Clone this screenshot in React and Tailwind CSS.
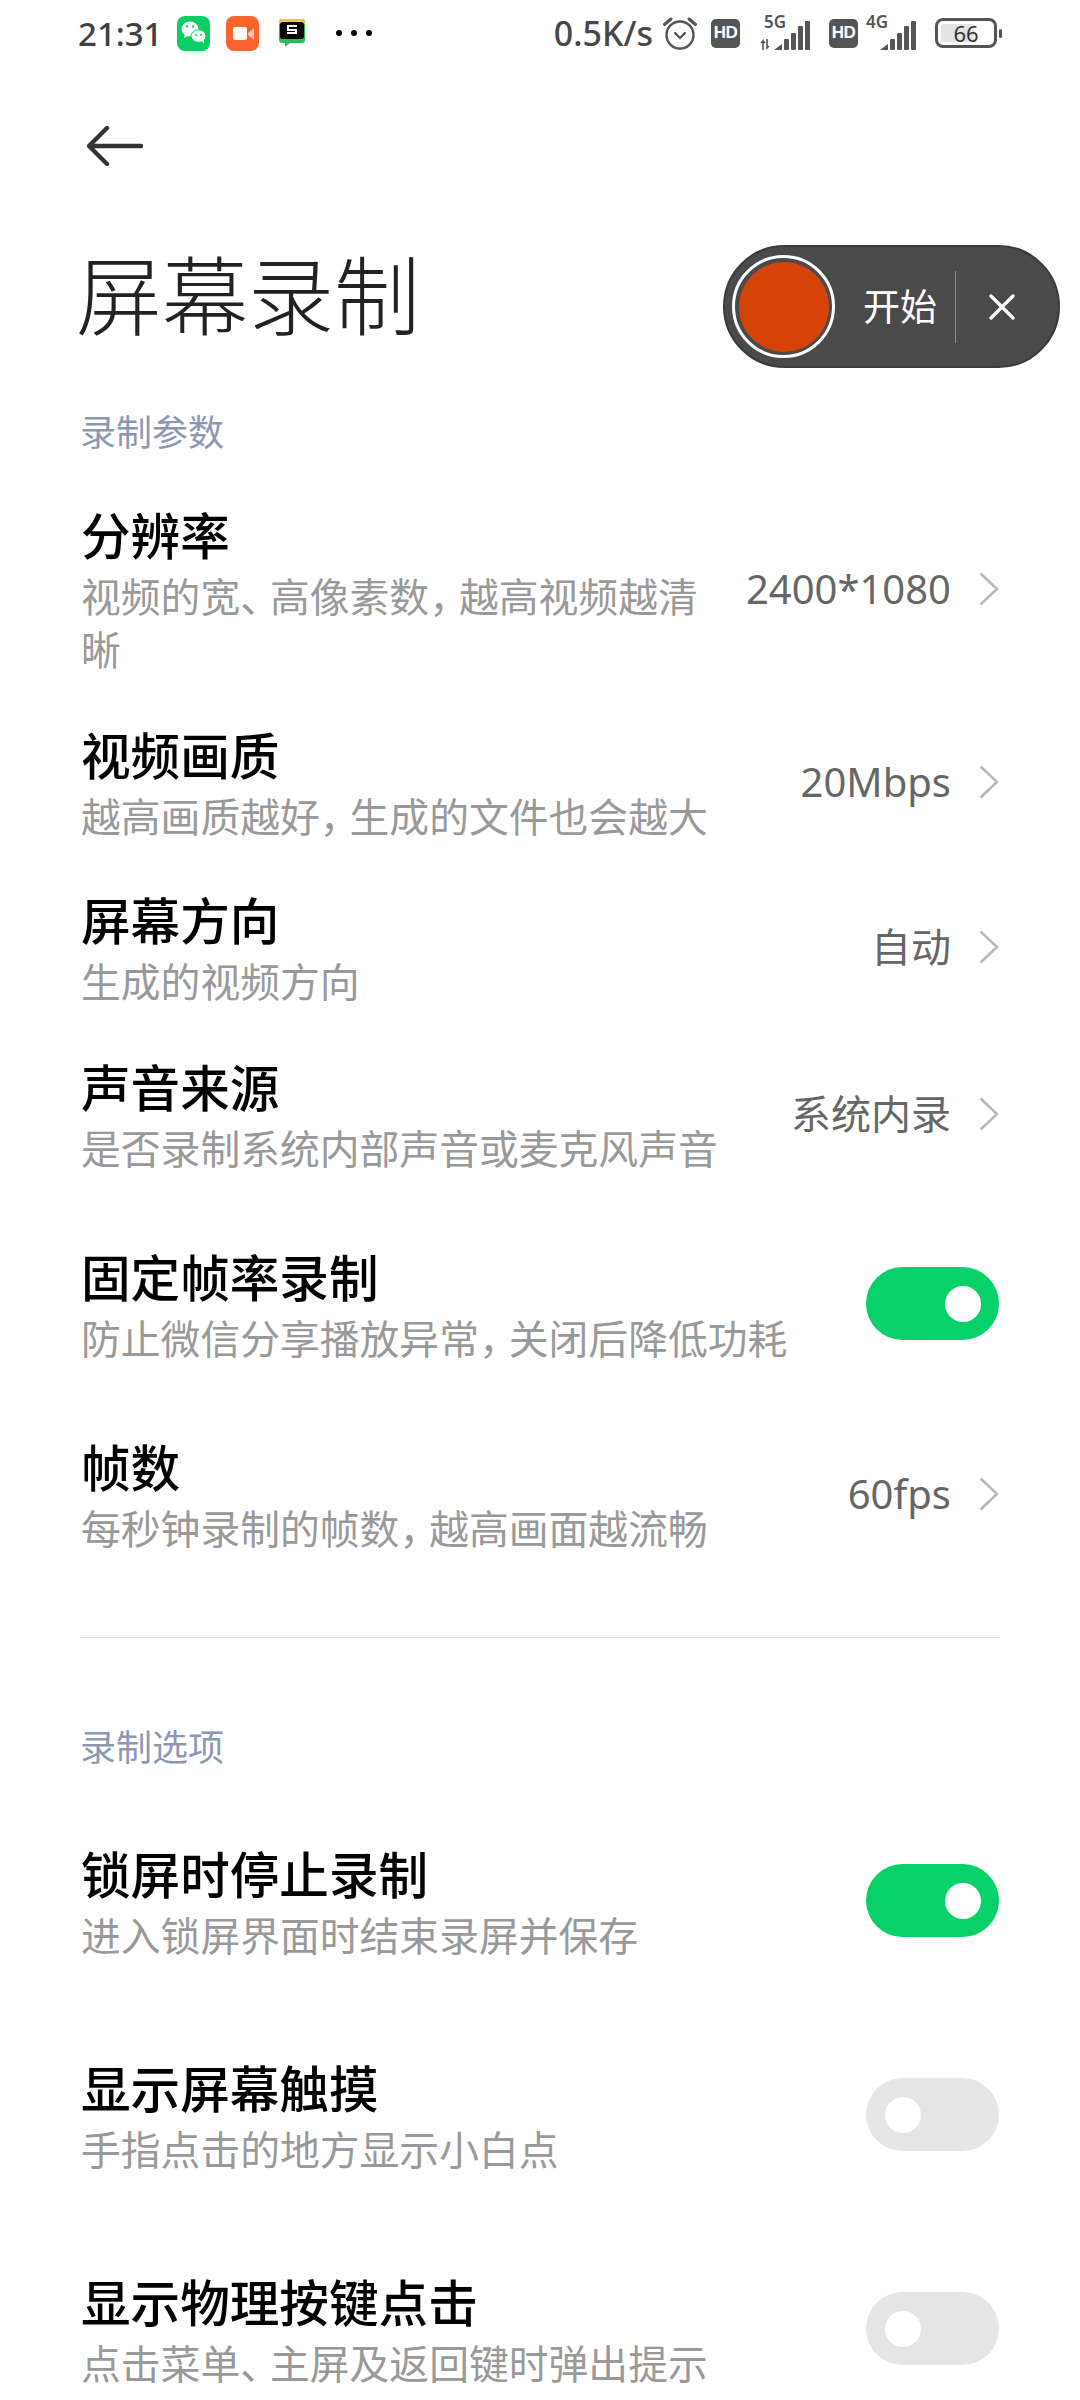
const FONT = "font-['Noto_Sans','Noto_Sans_CJK_SC',sans-serif]";

function WechatIcon() {
  return (
    <svg width="33" height="35" viewBox="0 0 33 35">
      <rect width="33" height="35" rx="8" fill="#0bcf63" />
      <ellipse cx="13" cy="13" rx="8.5" ry="7.5" fill="#fff" />
      <path d="M8 18l-1 4 4-2z" fill="#fff" />
      <ellipse cx="21.5" cy="20" rx="7.5" ry="6.3" fill="#fff" stroke="#0bcf63" strokeWidth="1" />
      <path d="M25 25l2 3 0-4z" fill="#fff" />
      <circle cx="10" cy="10.5" r="1.2" fill="#0bcf63" />
      <circle cx="16" cy="10.5" r="1.2" fill="#0bcf63" />
      <circle cx="19" cy="19" r="1" fill="#0bcf63" />
      <circle cx="24" cy="19" r="1" fill="#0bcf63" />
    </svg>
  );
}

function RecorderIcon() {
  return (
    <svg width="33" height="35" viewBox="0 0 33 35">
      <rect width="33" height="35" rx="8" fill="#fb642c" />
      <rect x="7" y="11" width="14" height="13" rx="2" fill="#fff" />
      <path d="M22 17l6-5v12l-6-5z" fill="#fdc3ac" />
    </svg>
  );
}

function ChatSIcon() {
  return (
    <svg width="26" height="28" viewBox="0 0 26 28">
      <path d="M3 0h20a3 3 0 013 3v18a3 3 0 01-3 3H11l-5 4v-4H3a3 3 0 01-3-3V3a3 3 0 013-3z" fill="#27c24c" />
      <path d="M3 0h20a3 3 0 013 3v2H0V3a3 3 0 013-3z" fill="#f1c24a" />
      <rect x="1" y="3" width="24" height="17" rx="3" fill="#050505" />
      <path d="M18 7H9v4h8v3H8" fill="none" stroke="#fff" strokeWidth="2" />
    </svg>
  );
}

function AlarmIcon() {
  return (
    <svg width="34" height="36" viewBox="0 0 34 36" fill="none" stroke="#555" strokeWidth="2.4" strokeLinecap="round" strokeLinejoin="round">
      <circle cx="17" cy="20" r="13.5" />
      <path d="M12 18l5 5 5-5" />
      <path d="M1.5 9.5L8 4M32.5 9.5L26 4" strokeWidth="3" />
    </svg>
  );
}

function HdBadge() {
  return (
    <div className="w-[29px] h-[29px] rounded-[5px] bg-[#555555] flex items-center justify-center text-[17px] font-bold text-white font-['Liberation_Sans',sans-serif] tracking-[-0.5px]">
      HD
    </div>
  );
}

function Signal({ label, arrows }) {
  return (
    <div className="relative w-[54px] h-[36px]">
      <svg className="absolute left-0 top-0" width="54" height="36" viewBox="0 0 54 36" fill="#555">
        {arrows && <path d="M3 35v-9l-2 2M3 26l2 2M7 24v9l2-2" stroke="#555" strokeWidth="1.6" fill="none" />}
        <path d="M14 35l8-6v6z" />
        <rect x="24" y="24" width="5" height="11" rx="1" />
        <rect x="31" y="18" width="5" height="17" rx="1" />
        <rect x="38" y="11" width="5" height="24" rx="1" />
        <rect x="45" y="6" width="5" height="29" rx="1" />
      </svg>
      <span className={`absolute top-[-3px] text-[17px] leading-[20px] font-semibold text-[#555555] ${arrows ? "left-[4px]" : "left-0"}`}>
        {label}
      </span>
    </div>
  );
}

function Battery() {
  return (
    <div className="flex items-center gap-[2px]">
      <div className="w-[62px] h-[30px] rounded-[8px] border-[3px] border-[#555555] p-[3px] relative">
        <div className="h-full w-[66%] rounded-[2px] bg-[#e3e3e3]" />
        <span className="absolute inset-0 flex items-center justify-center text-[22px] leading-none text-[#333333]">66</span>
      </div>
      <div className="w-[3px] h-[9px] rounded-full bg-[#555555]" />
    </div>
  );
}

function StatusBar() {
  return (
    <div className="h-[66px] flex items-center pl-[78px] pr-[78px]">
      <span className="w-[99px] text-[33px] font-medium text-[#404040] leading-none">21:31</span>
      <WechatIcon />
      <div className="w-[16px]" />
      <RecorderIcon />
      <div className="w-[20px]" />
      <ChatSIcon />
      <div className="ml-[31px] flex gap-[9px]">
        <div className="w-[6px] h-[6px] rounded-full bg-black" />
        <div className="w-[6px] h-[6px] rounded-full bg-black" />
        <div className="w-[6px] h-[6px] rounded-full bg-black" />
      </div>
      <div className="ml-auto flex items-center">
        <span className="text-[34px] font-medium text-[#484848] leading-none mr-[10px]">0.5K/s</span>
        <AlarmIcon />
        <div className="w-[14px]" />
        <HdBadge />
        <div className="w-[20px]" />
        <Signal label="5G" arrows />
        <div className="w-[15px]" />
        <HdBadge />
        <div className="w-[8px]" />
        <Signal label="4G" />
        <div className="w-[15px]" />
        <Battery />
      </div>
    </div>
  );
}

function Toggle({ on }) {
  return (
    <div className={`w-[133px] h-[73px] rounded-full shrink-0 flex items-center ${on ? "bg-[#07d168] justify-end pr-[18px]" : "bg-[#e5e5e5] pl-[19px]"}`}>
      <div className="w-[36px] h-[36px] rounded-full bg-white" />
    </div>
  );
}

function Chevron() {
  return (
    <svg width="20" height="34" viewBox="0 0 20 34" fill="none" stroke="#b8b8b8" strokeWidth="2.6" className="shrink-0 ml-[28px]">
      <path d="M1.5 1.5L18 17 1.5 32.5" />
    </svg>
  );
}

// the phone's font sets these two marks narrower than a full em
function Sub({ text }) {
  return text.split(/([，、])/).map((part, i) =>
    part === "，" || part === "、" ? (
      <span key={i} className="tracking-[-10px]">{part}</span>
    ) : (
      part
    )
  );
}

function Row({ title, sub, value, toggle, className = "" }) {
  return (
    <div className={`flex items-center justify-between ${className}`}>
      <div className={`shrink-0 ${value ? "w-[650px]" : "w-[720px]"}`}>
        <div className="text-[49.6px] leading-[60px] font-medium text-black">{title}</div>
        <div className="mt-[4px] text-[39.8px] leading-[53px] text-[#999999]">
          <Sub text={sub} />
        </div>
      </div>
      {value && (
        <div className="flex items-center pb-[5px]">
          <span className="text-[40px] text-[#666666] whitespace-nowrap">{value}</span>
          <Chevron />
        </div>
      )}
      {toggle !== undefined && (
        <div className="pb-[6px]">
          <Toggle on={toggle} />
        </div>
      )}
    </div>
  );
}

function SectionLabel({ children, className = "" }) {
  return <div className={`text-[36px] leading-[50px] text-[#8c97b4] ${className}`}>{children}</div>;
}

function FloatingRecorder() {
  return (
    <div className="absolute left-[723px] top-[245px] w-[337px] h-[123px] rounded-full bg-[#4a4a4a] border-[2px] border-[#3a3a3a] flex items-center pl-[7px]">
      <div className="w-[103px] h-[103px] rounded-full border-[3px] border-white flex items-center justify-center shrink-0">
        <div className="w-[90px] h-[90px] rounded-full bg-[#d54309]" />
      </div>
      <span className="ml-[28px] text-[37px] text-white leading-none">开始</span>
      <div className="ml-[18px] w-px h-[72px] bg-[#8a8a8a]" />
      <svg width="26" height="26" viewBox="0 0 26 26" className="ml-[33px]" stroke="#fff" strokeWidth="3.2" strokeLinecap="round">
        <path d="M2 2l22 22M24 2L2 24" />
      </svg>
    </div>
  );
}

export default function App() {
  return (
    <div className={`relative w-[1080px] h-[2400px] overflow-hidden bg-white ${FONT}`}>
      <StatusBar />
      <FloatingRecorder />

      {/* Back arrow */}
      <div className="pl-[87px] pt-[60px]">
        <svg width="56" height="40" viewBox="0 0 56 40" fill="none" stroke="#333" strokeWidth="4.4" strokeLinecap="round" strokeLinejoin="round" className="block">
          <path d="M54 20H3M20 2L2 20l18 18" />
        </svg>
      </div>

      <main className="px-[81px]">
        <h1 className="mt-[70px] ml-[-5px] text-[86px] leading-[120px] font-light text-[#222222]">屏幕录制</h1>

        <SectionLabel className="mt-[52px] ml-[-1px]">录制参数</SectionLabel>

        <Row className="mt-[48px]" title="分辨率" sub="视频的宽、高像素数，越高视频越清晰" value="2400*1080" />
        <Row className="mt-[50px]" title="视频画质" sub="越高画质越好，生成的文件也会越大" value="20Mbps" />
        <Row className="mt-[48px]" title="屏幕方向" sub="生成的视频方向" value="自动" />
        <Row className="mt-[50px]" title="声音来源" sub="是否录制系统内部声音或麦克风声音" value="系统内录" />
        <Row className="mt-[73px]" title="固定帧率录制" sub="防止微信分享播放异常，关闭后降低功耗" toggle={true} />
        <Row className="mt-[73px]" title="帧数" sub="每秒钟录制的帧数，越高画面越流畅" value="60fps" />

        <div className="mt-[82px] h-px bg-[#e2e2e2]" />

        <SectionLabel className="mt-[85px] ml-[-1px]">录制选项</SectionLabel>

        <Row className="mt-[72px]" title="锁屏时停止录制" sub="进入锁屏界面时结束录屏并保存" toggle={true} />
        <Row className="mt-[97px]" title="显示屏幕触摸" sub="手指点击的地方显示小白点" toggle={false} />
        <Row className="mt-[97px]" title="显示物理按键点击" sub="点击菜单、主屏及返回键时弹出提示" toggle={false} />
      </main>
    </div>
  );
}
